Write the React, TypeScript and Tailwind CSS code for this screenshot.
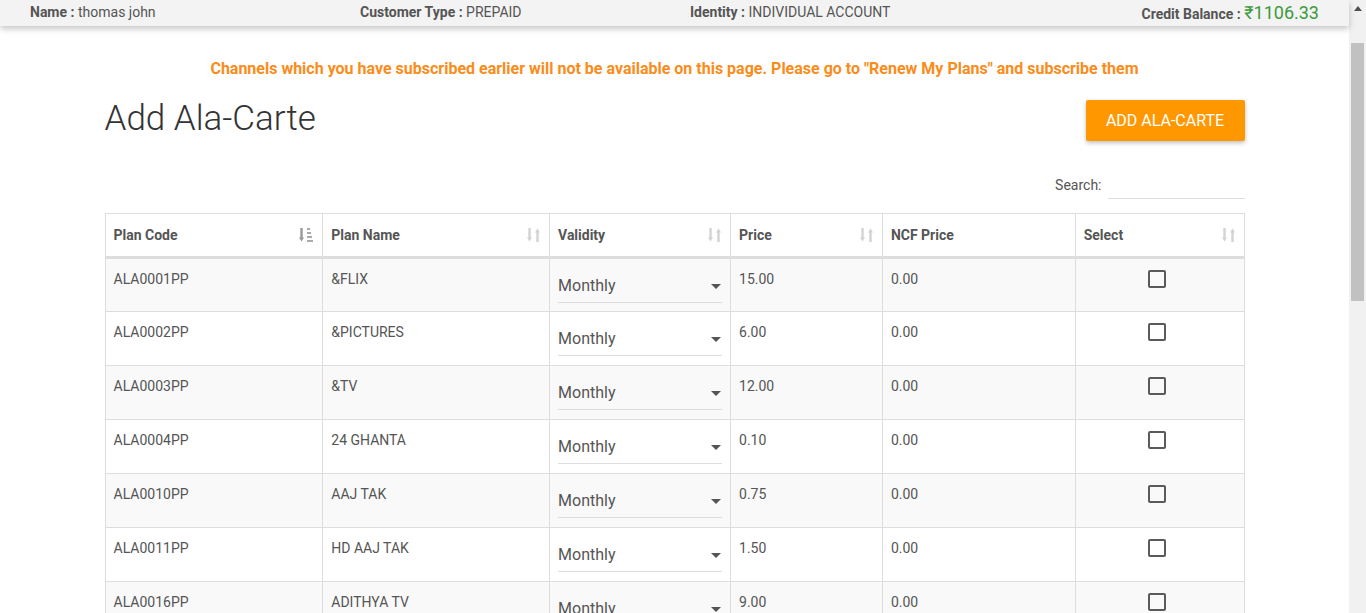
import React from "react";

const rows = [
  { code: "ALA0001PP", name: "&FLIX", price: "15.00" },
  { code: "ALA0002PP", name: "&PICTURES", price: "6.00" },
  { code: "ALA0003PP", name: "&TV", price: "12.00" },
  { code: "ALA0004PP", name: "24 GHANTA", price: "0.10" },
  { code: "ALA0010PP", name: "AAJ TAK", price: "0.75" },
  { code: "ALA0011PP", name: "HD AAJ TAK", price: "1.50" },
  { code: "ALA0016PP", name: "ADITHYA TV", price: "9.00" },
];

function SortBoth() {
  return (
    <svg width="14" height="16" viewBox="0 0 14 16" className="shrink-0">
      <path d="M2.5 1v11" stroke="#d3d3d3" strokeWidth="2.4" />
      <path d="M0 10.5l2.5 4 2.5-4z" fill="#d3d3d3" />
      <path d="M10.5 15V4" stroke="#d3d3d3" strokeWidth="2.4" />
      <path d="M8 5.5l2.5-4 2.5 4z" fill="#d3d3d3" />
    </svg>
  );
}

function SortAsc() {
  return (
    <svg width="15" height="16" viewBox="0 0 15 16" className="shrink-0">
      <path d="M2.5 1v11" stroke="#999" strokeWidth="2.4" />
      <path d="M0 10.5l2.5 4 2.5-4z" fill="#999" />
      <rect x="8" y="1" width="3" height="2" fill="#aaa" />
      <rect x="8" y="5" width="4" height="2" fill="#aaa" />
      <rect x="8" y="9" width="5" height="2" fill="#aaa" />
      <rect x="8" y="13" width="6" height="2" fill="#aaa" />
    </svg>
  );
}

function Th({ label, sort, w }: { label: string; sort?: "asc" | "both"; w: string }) {
  return (
    <th className={`${w} border border-[#dddddd] border-b-[3px] h-[44px] px-2 text-left align-middle`}>
      <div className="flex items-center justify-between">
        <span className="text-[14px] font-bold text-[#555]">{label}</span>
        {sort === "asc" && <SortAsc />}
        {sort === "both" && <SortBoth />}
      </div>
    </th>
  );
}

export default function App() {
  return (
    <div className="h-[613px] w-[1366px] overflow-hidden flex bg-white font-['Roboto',sans-serif] text-[#555]">
      <div className="flex-1 min-w-0 flex flex-col">
        {/* top customer bar */}
        <div className="h-[30px] bg-[#f3f3f3] shadow-[0_3px_6px_rgba(0,0,0,0.22)] flex items-start text-[14px] text-[#555] relative z-10">
          <div className="w-[360px] pl-[30px] pt-[2px]">
            <span className="font-bold">Name :</span> thomas john
          </div>
          <div className="w-[330px] pt-[2px]">
            <span className="font-bold">Customer Type :</span> PREPAID
          </div>
          <div className="w-[330px] pt-[2px]">
            <span className="font-bold">Identity :</span> INDIVIDUAL ACCOUNT
          </div>
          <div className="flex-1 flex justify-end items-baseline pr-[30px] -mt-[1px]">
            <span className="font-bold">Credit Balance :&nbsp;</span>
            <span className="text-[18px] text-[#3c9a3c]">₹1106.33</span>
          </div>
        </div>

        <div className="w-[1140px] mx-auto">
          <p className="text-center text-[16px] font-bold text-[#fb8c1a] mt-[32px] leading-[22px]">
            Channels which you have subscribed earlier will not be available on this page. Please go to "Renew My Plans" and subscribe them
          </p>

          <div className="flex items-start justify-between mt-[20px]">
            <h1 className="text-[35px] font-light text-[#333] leading-[40px] -mt-[1px]">Add Ala-Carte</h1>
            <button className="h-[41px] w-[159px] bg-[#ff9800] text-white text-[16px] uppercase rounded-[2px] shadow-[0_2px_4px_rgba(0,0,0,0.25)]">
              Add Ala-Carte
            </button>
          </div>

          <div className="flex justify-end items-center mt-[31px] gap-[6px]">
            <span className="text-[14px] text-[#555]">Search:</span>
            <div className="w-[137px] h-[27px] border-b border-[#dddddd]" />
          </div>

          <table className="w-full border-collapse mt-[14px]">
            <thead>
              <tr>
                <Th label="Plan Code" sort="asc" w="w-[218px]" />
                <Th label="Plan Name" sort="both" w="w-[227px]" />
                <Th label="Validity" sort="both" w="w-[181px]" />
                <Th label="Price" sort="both" w="w-[152px]" />
                <Th label="NCF Price" w="w-[193px]" />
                <Th label="Select" sort="both" w="w-[169px]" />
              </tr>
            </thead>
            <tbody>
              {rows.map((r, i) => (
                <tr key={r.code} className={i % 2 === 0 ? "bg-[#f9f9f9]" : "bg-white"}>
                  <td className="h-[54px] border border-[#dddddd] px-2 pt-[10px] align-top text-[14px]">{r.code}</td>
                  <td className="border border-[#dddddd] px-2 pt-[10px] align-top text-[14px]">{r.name}</td>
                  <td className="border border-[#dddddd] px-2 align-top">
                    <div className="mt-[10px] w-[164px] h-[34px] border-b border-[#dddddd] flex items-center justify-between">
                      <span className="text-[16px] text-[#555]">Monthly</span>
                      <svg width="10" height="5" viewBox="0 0 10 5" className="mr-[1px] mt-[2px]">
                        <path d="M0 0h10L5 5z" fill="#555" />
                      </svg>
                    </div>
                  </td>
                  <td className="border border-[#dddddd] px-2 pt-[10px] align-top text-[14px]">{r.price}</td>
                  <td className="border border-[#dddddd] px-2 pt-[10px] align-top text-[14px]">0.00</td>
                  <td className="border border-[#dddddd] pt-[11px] align-top">
                    <div className="w-[18px] h-[18px] border-2 border-[#5a5a5a] rounded-[2px] mx-auto -translate-x-[3px]" />
                  </td>
                </tr>
              ))}
            </tbody>
          </table>
        </div>
      </div>

      {/* scrollbar */}
      <div className="w-[17px] bg-[#f1f1f1] flex flex-col items-center">
        <svg width="8" height="5" viewBox="0 0 8 5" className="mt-[6px]">
          <path d="M0 5L4 0l4 5z" fill="#505050" />
        </svg>
        <div className="mt-[32px] w-[13px] h-[258px] bg-[#c1c1c1]" />
      </div>
    </div>
  );
}
